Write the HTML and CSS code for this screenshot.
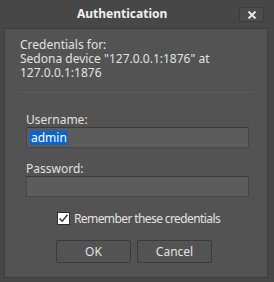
FILE: index.html
```html
<!DOCTYPE html>
<html lang="en">

<head>
    <meta charset="UTF-8" />
    <meta name="viewport" content="width=device-width, initial-scale=1.0" />
    <title>Authentication</title>
    <link rel="stylesheet" href="styles.css">
</head>

<body>
    <div class="dialog">
        <div class="titlebar">
            <span class="title">Authentication</span>
            <button class="close" type="button">
                <svg width="10" height="8" viewBox="0 0 10 8">
                    <path d="M1.5 0.5 L8.5 7.5 M8.5 0.5 L1.5 7.5" stroke="#e6e6e6" stroke-width="2" fill="none" />
                </svg>
            </button>
        </div>

        <div class="panel">
            <div class="info">
                Credentials for:<br>
                Sedona device "127.0.0.1:1876" at<br>
                127.0.0.1:1876
            </div>
            <div class="separator"></div>

            <div class="field">
                <label for="user">Username:</label>
                <div class="input" id="user"><span class="selected">admin</span></div>
            </div>
            <div class="field">
                <label for="pass">Password:</label>
                <div class="input" id="pass"></div>
            </div>

            <div class="remember">
                <span class="checkbox">
                    <svg width="11" height="11" viewBox="0 0 11 11">
                        <path d="M1.5 5.5 L4.2 8.3 L9.5 1.8" stroke="#333" stroke-width="1.4" fill="none" />
                    </svg>
                </span>
                <span class="remember-text">Remember these credentials</span>
            </div>

            <div class="buttons">
                <button type="button">OK</button>
                <button type="button">Cancel</button>
            </div>
        </div>
    </div>
</body>

</html>
```

FILE: styles.css
```css
body {
    margin: 0;
    background: #474747;
    font-family: 'Noto Sans', 'Liberation Sans', sans-serif;
    font-size: 12px;
    color: #e2e2e2;
}

.dialog {
    width: 274px;
    height: 282px;
    display: flex;
    flex-direction: column;
    box-sizing: border-box;
    padding: 0 6px 4px 4px;
}

.titlebar {
    height: 28px;
    display: flex;
    align-items: center;
    padding-left: 73px;
    position: relative;
}

.title {
    font-weight: bold;
    font-size: 12px;
    color: #f0f0f0;
    margin-top: -2px;
}

.close {
    position: absolute;
    right: 4px;
    top: 7px;
    width: 25px;
    height: 15px;
    padding: 0;
    border: 1px solid #3c3c3c;
    border-radius: 2px;
    background: #4c4c4c;
    display: flex;
    align-items: center;
    justify-content: center;
}

.panel {
    flex: 1;
    background: #535353;
    border: 1px solid #3e3e3e;
    padding: 8px 14px 0 15px;
}

.info {
    line-height: 14px;
    padding-top: 1px;
}

.separator {
    height: 1px;
    background: #5f5f5f;
    border-top: 1px solid #4a4a4a;
    margin: 10px 0 20px 0;
}

.field {
    padding-left: 6px;
    margin-bottom: 13px;
}

.field label {
    display: block;
    line-height: 15px;
}

.input {
    height: 19px;
    width: 218px;
    box-sizing: content-box;
    background: #5c5c5c;
    border: 1px solid #474747;
    border-top-color: #3a3a3a;
    padding: 0 0 0 3px;
    display: flex;
    align-items: center;
}

.selected {
    background: #0a64d0;
    color: #ffffff;
    line-height: 14px;
    padding: 0 1px;
}

.remember {
    display: flex;
    align-items: center;
    gap: 4px;
    height: 16px;
    margin-left: 37px;
}

.remember-text {
    letter-spacing: -0.6px;
}

.checkbox {
    width: 11px;
    height: 11px;
    background: #ffffff;
    border: 1px solid #2e2e2e;
    display: flex;
}

.buttons {
    display: flex;
    gap: 6px;
    margin: 14px 0 0 36px;
}

.buttons button {
    width: 75px;
    height: 23px;
    background: #535353;
    border: 1px solid #3b3b3b;
    border-radius: 2px;
    color: #e2e2e2;
    font-family: 'Noto Sans', 'Liberation Sans', sans-serif;
    font-size: 12px;
    padding: 0;
}
```
